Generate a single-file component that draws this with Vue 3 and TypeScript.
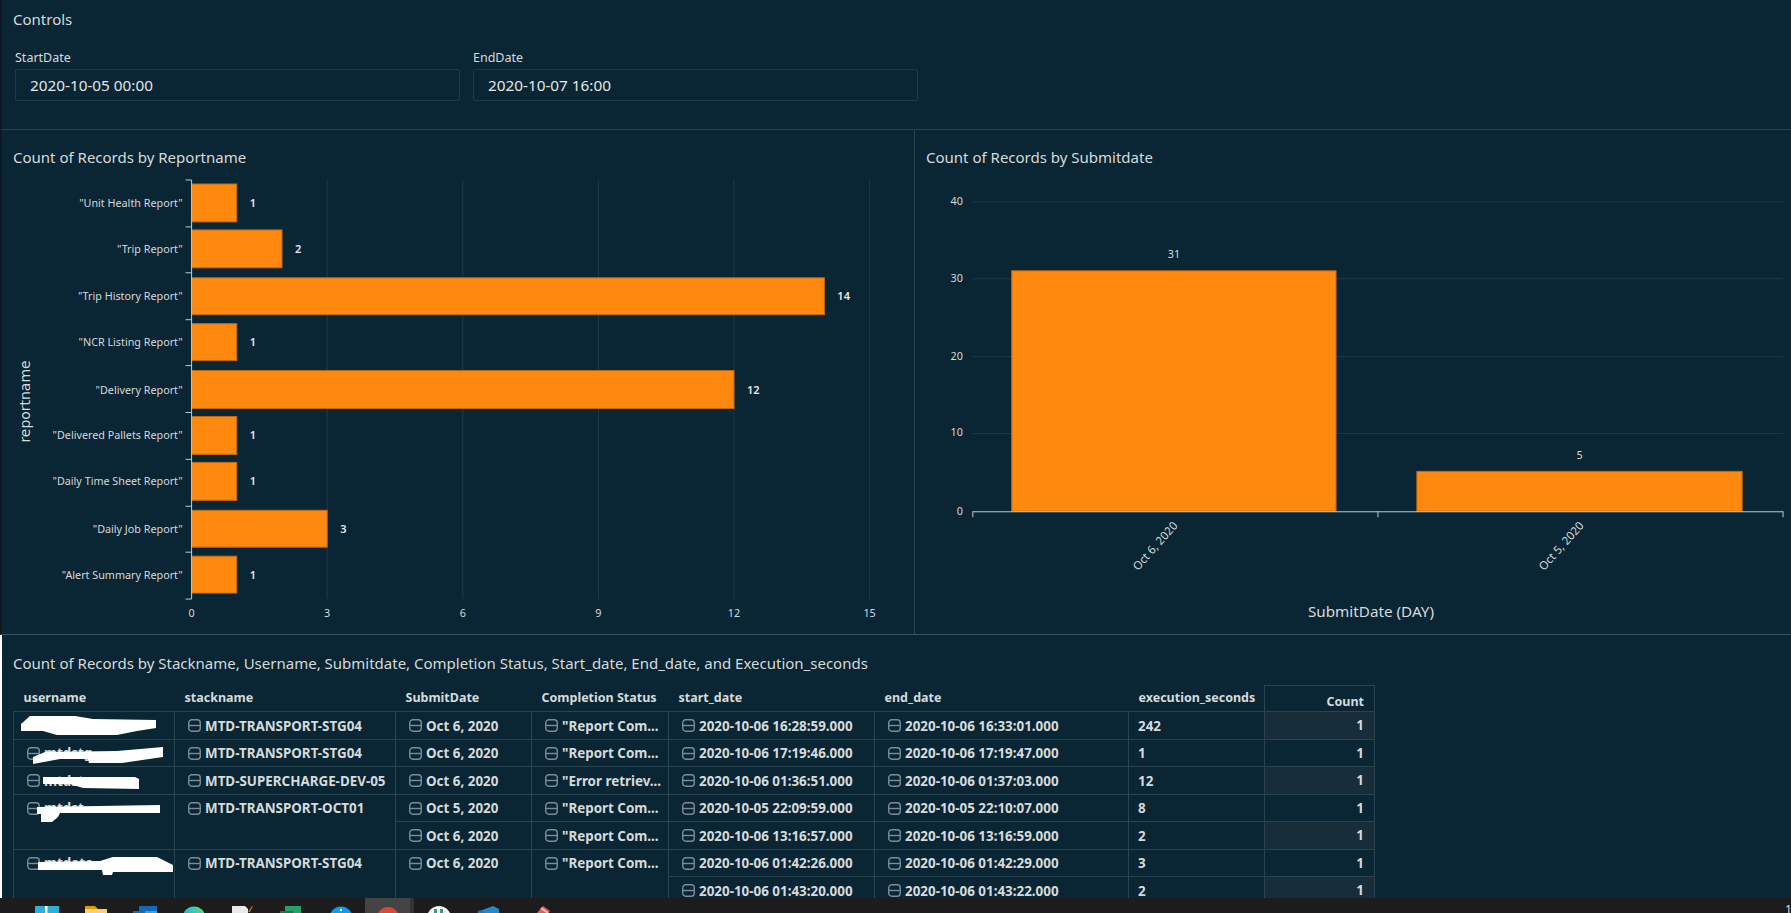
<script setup lang="ts">
interface Cell {
  text: string
  span?: number
  icon?: boolean
}

const reportBars = [
  { name: '"Unit Health Report"', value: 1, top: 184, bottom: 222 },
  { name: '"Trip Report"', value: 2, top: 230, bottom: 268 },
  { name: '"Trip History Report"', value: 14, top: 278, bottom: 315 },
  { name: '"NCR Listing Report"', value: 1, top: 324, bottom: 361 },
  { name: '"Delivery Report"', value: 12, top: 371, bottom: 409 },
  { name: '"Delivered Pallets Report"', value: 1, top: 417, bottom: 455 },
  { name: '"Daily Time Sheet Report"', value: 1, top: 463, bottom: 501 },
  { name: '"Daily Job Report"', value: 3, top: 511, bottom: 548 },
  { name: '"Alert Summary Report"', value: 1, top: 557, bottom: 594 },
]
const unit = 45.3
const axisX = 191
const xTicks = [0, 3, 6, 9, 12, 15]
const catTicks = [180, 227, 273, 320, 366, 413, 460, 507, 553, 600]

const yTicks = [
  { label: '40', y: 202 },
  { label: '30', y: 279 },
  { label: '20', y: 357 },
  { label: '10', y: 434 },
]
const dateBars = [
  { label: 'Oct 6, 2020', value: '31', x: 1011, w: 325, top: 271, tx: 1178 },
  { label: 'Oct 5, 2020', value: '5', x: 1417, w: 326, top: 472, tx: 1585 },
]

const columns = [
  { title: 'username', width: 161 },
  { title: 'stackname', width: 221 },
  { title: 'SubmitDate', width: 136 },
  { title: 'Completion Status', width: 137 },
  { title: 'start_date', width: 206 },
  { title: 'end_date', width: 254 },
  { title: 'execution_seconds', width: 136 },
]

const ic = (text: string, span?: number): Cell => ({ text, span, icon: true })

const rows: Cell[][] = [
  [ { text: 'mtdst' }, ic('MTD-TRANSPORT-STG04'), ic('Oct 6, 2020'), ic('"Report Com...'), ic('2020-10-06 16:28:59.000'), ic('2020-10-06 16:33:01.000'), { text: '242' } ],
  [ ic('mtdstg'), ic('MTD-TRANSPORT-STG04'), ic('Oct 6, 2020'), ic('"Report Com...'), ic('2020-10-06 17:19:46.000'), ic('2020-10-06 17:19:47.000'), { text: '1' } ],
  [ ic('mtdst'), ic('MTD-SUPERCHARGE-DEV-05'), ic('Oct 6, 2020'), ic('"Error retriev...'), ic('2020-10-06 01:36:51.000'), ic('2020-10-06 01:37:03.000'), { text: '12' } ],
  [ ic('mtdst', 2), ic('MTD-TRANSPORT-OCT01', 2), ic('Oct 5, 2020'), ic('"Report Com...'), ic('2020-10-05 22:09:59.000'), ic('2020-10-05 22:10:07.000'), { text: '8' } ],
  [ ic('Oct 6, 2020'), ic('"Report Com...'), ic('2020-10-06 13:16:57.000'), ic('2020-10-06 13:16:59.000'), { text: '2' } ],
  [ ic('mtdata', 2), ic('MTD-TRANSPORT-STG04', 2), ic('Oct 6, 2020', 2), ic('"Report Com...', 2), ic('2020-10-06 01:42:26.000'), ic('2020-10-06 01:42:29.000'), { text: '3' } ],
  [ ic('2020-10-06 01:43:20.000'), ic('2020-10-06 01:43:22.000'), { text: '2' } ],
]

// white scribbles someone drew over the usernames, in page coordinates
const scribbles = [
  '21,725 30,717 75,717 93,720 156,721 156,729 137,732 117,736 57,736 43,732 21,732',
  '33,758 45,753 117,752 163,748 163,758 122,764 89,764 88,760 60,760 33,765',
  '43,778 135,778 139,780 139,790 83,789 70,785 43,785',
  '37,808 160,806 160,814 60,814 58,818 52,823 41,823 41,815 37,815',
  '38,863 100,862 113,858 157,858 173,866 173,873 113,873 112,876 103,876 102,871 38,871',
]
</script>

<template>
  <div class="page">
    <section class="controls">
      <h2 class="title">Controls</h2>
      <div class="fields">
        <label class="field">
          <span class="field-label">StartDate</span>
          <span class="field-input">2020-10-05 00:00</span>
        </label>
        <label class="field">
          <span class="field-label">EndDate</span>
          <span class="field-input">2020-10-07 16:00</span>
        </label>
      </div>
    </section>

    <section class="charts">
      <div class="chart chart-left">
        <h2 class="title">Count of Records by Reportname</h2>
        <svg class="plot" width="912" height="457" viewBox="2 178 912 457">
          <line v-for="t in xTicks.slice(1)" :key="t" :x1="axisX + t * unit" :x2="axisX + t * unit" y1="180" y2="600" class="grid" />
          <g v-for="b in reportBars" :key="b.name">
            <rect :x="axisX" :y="b.top" :width="b.value * unit" :height="b.bottom - b.top" class="bar" />
            <text :x="axisX - 9" :y="(b.top + b.bottom) / 2 + 4" text-anchor="end" class="tick">{{ b.name }}</text>
            <text :x="axisX + b.value * unit + 13" :y="(b.top + b.bottom) / 2 + 4" class="value">{{ b.value }}</text>
          </g>
          <line :x1="axisX" :x2="axisX" y1="180" y2="600" class="axis" />
          <line v-for="y in catTicks" :key="y" :x1="axisX - 6" :x2="axisX" :y1="y" :y2="y" class="axis" />
          <text v-for="t in xTicks" :key="'x' + t" :x="axisX + t * unit" y="618" text-anchor="middle" class="tick">{{ t }}</text>
          <text x="29" y="402" transform="rotate(-90 29 402)" text-anchor="middle" class="axis-name wide">reportname</text>
        </svg>
      </div>

      <div class="chart chart-right">
        <h2 class="title">Count of Records by Submitdate</h2>
        <svg class="plot" width="876" height="457" viewBox="915 178 876 457">
          <line v-for="t in yTicks" :key="t.label" x1="972" x2="1784" :y1="t.y" :y2="t.y" class="grid" />
          <text v-for="t in yTicks" :key="'l' + t.label" x="962" :y="t.y + 3" text-anchor="end" class="tick">{{ t.label }}</text>
          <text x="962" y="516" text-anchor="end" class="tick">0</text>
          <g v-for="b in dateBars" :key="b.label">
            <rect :x="b.x" :y="b.top" :width="b.w" :height="512 - b.top" class="bar" />
            <text :x="b.x + b.w / 2" :y="b.top - 12.5" text-anchor="middle" class="tick">{{ b.value }}</text>
            <text :x="b.tx" y="527" :transform="`rotate(-48 ${b.tx} 527)`" text-anchor="end" class="tick date">{{ b.label }}</text>
          </g>
          <line x1="972" x2="1784" y1="512.5" y2="512.5" class="axis" />
          <line v-for="x in [972, 1378, 1784]" :key="x" :x1="x" :x2="x" y1="512" y2="518" class="axis" />
          <text x="1371" y="618" text-anchor="middle" class="axis-name">SubmitDate (DAY)</text>
        </svg>
      </div>
    </section>

    <section class="records">
      <h2 class="title">Count of Records by Stackname, Username, Submitdate, Completion Status, Start_date, End_date, and Execution_seconds</h2>
      <table class="grid-table">
        <colgroup>
          <col v-for="c in columns" :key="c.title" :style="{ width: c.width + 'px' }" />
          <col style="width: 110px" />
        </colgroup>
        <thead>
          <tr>
            <th v-for="c in columns" :key="c.title">{{ c.title }}</th>
            <th class="count-head">Count</th>
          </tr>
        </thead>
        <tbody>
          <tr v-for="(row, i) in rows" :key="i">
            <td v-for="(cell, j) in row" :key="j" :rowspan="cell.span" :class="{ plain: !cell.icon }">
              <span class="cell">
                <svg v-if="cell.icon" class="collapse" width="13" height="13" viewBox="0 0 13 13">
                  <rect x="0.75" y="0.75" width="11.5" height="11.5" rx="3" />
                  <line x1="1" x2="12" y1="6.5" y2="6.5" />
                </svg>
                {{ cell.text }}
              </span>
            </td>
            <td class="count" :class="{ striped: i % 2 === 0 }">1</td>
          </tr>
        </tbody>
      </table>
      <svg class="scribble" width="180" height="200" viewBox="0 700 180 200">
        <polygon v-for="p in scribbles" :key="p" :points="p" />
      </svg>
    </section>

    <footer class="taskbar">
      <span class="slot">
        <svg width="24" height="24" viewBox="0 0 24 24"><rect width="24" height="24" fill="#29b0dc" /><rect x="10" y="0" width="2.5" height="12" fill="#fff" /></svg>
      </span>
      <span class="slot">
        <svg width="24" height="24" viewBox="0 0 24 24"><path d="M1 0h10l3 3H1z" fill="#d89a0e" /><rect x="1" y="3" width="22" height="20" fill="#fad165" /></svg>
      </span>
      <span class="slot">
        <svg width="24" height="24" viewBox="0 0 24 24"><rect x="6" width="18" height="5" fill="#0f6cbd" /><rect y="5" width="12" height="9" fill="#0f6cbd" /><rect x="12" y="5" width="12" height="9" fill="#28a8ea" /></svg>
      </span>
      <span class="slot">
        <svg width="24" height="24" viewBox="0 0 24 24">
          <defs><linearGradient id="edge" x1="0" y1="1" x2="1" y2="0"><stop offset="0" stop-color="#1b6fc4" /><stop offset="0.55" stop-color="#2cc3d0" /><stop offset="1" stop-color="#6fdc6a" /></linearGradient></defs>
          <circle cx="12" cy="12" r="11.5" fill="url(#edge)" />
        </svg>
      </span>
      <span class="slot">
        <svg width="24" height="24" viewBox="0 0 24 24"><path d="M1 0h13l3 3v20H1z" fill="#e9e9e9" /><path d="M17 6 21 0h1l-3 6z" fill="#c8701c" /></svg>
      </span>
      <span class="slot">
        <svg width="24" height="24" viewBox="0 0 24 24"><rect x="5" width="16" height="20" fill="#21a366" /><rect y="5" width="5" height="10" fill="#107c41" /><rect x="5" y="5" width="8" height="10" fill="#107c41" /></svg>
      </span>
      <span class="slot">
        <svg width="24" height="24" viewBox="0 0 24 24"><circle cx="12" cy="12" r="11.5" fill="#0a9cf0" /><circle cx="12" cy="4" r="1.2" fill="#fff" /></svg>
      </span>
      <span class="slot active">
        <svg width="24" height="24" viewBox="0 0 24 24"><circle cx="12" cy="12" r="11" fill="#d9483b" /></svg>
      </span>
      <span class="slot">
        <svg width="24" height="24" viewBox="0 0 24 24"><circle cx="12" cy="12" r="12" fill="#f4f4f4" /><rect x="7" y="3" width="3" height="6" fill="#2f9e8f" /><rect x="13" y="3" width="3" height="6" fill="#2f9e8f" /></svg>
      </span>
      <span class="slot">
        <svg width="24" height="24" viewBox="0 0 24 24"><path d="M17 0 23 3v20h-2L7 9 1 6z" fill="#2489ca" /><path d="M1 6l3-2 5 3z" fill="#1070b3" /></svg>
      </span>
      <span class="slot pencil">
        <svg width="24" height="24" viewBox="0 0 24 24"><path d="M7 8 14 0l7 5-7 9z" fill="#d9605a" /><path d="M12 2l7 5" stroke="#f3b6b0" stroke-width="2" /></svg>
      </span>
      <span class="clock">10</span>
    </footer>
  </div>
</template>

<style scoped>
.page {
  width: 1791px;
  height: 913px;
  display: flex;
  flex-direction: column;
  overflow: hidden;
  background: #0a2533;
  color: #d5dbdb;
  font-family: "Noto Sans", "Liberation Sans", sans-serif;
}

.title {
  margin: 0;
  font-size: 15px;
  line-height: 20px;
  font-weight: 400;
  color: #d5dbdb;
  white-space: nowrap;
}

.controls {
  height: 129px;
  box-sizing: border-box;
  padding: 9px 0 0 11px;
  border-left: 2px solid #0c1a24;
  flex: none;
}

.fields {
  display: flex;
  gap: 13px;
  margin: 20px 0 0 0;
  padding-left: 2px;
}

.field {
  display: flex;
  flex-direction: column;
  width: 445px;
}

.field-label {
  font-size: 12.5px;
  line-height: 18px;
  margin-bottom: 2px;
}

.field-input {
  height: 32px;
  box-sizing: border-box;
  border: 1px solid #1f3a47;
  border-radius: 2px;
  padding-left: 14px;
  font-size: 15.3px;
  line-height: 30px;
  color: #e3e7e7;
}

.charts {
  height: 506px;
  flex: none;
  display: flex;
  border-top: 1px solid #2a4350;
  border-bottom: 1px solid #3a5360;
  box-sizing: border-box;
  border-left: 2px solid #0c1a24;
}

.chart {
  display: flex;
  flex-direction: column;
  padding-top: 17px;
}

.chart-left {
  width: 912px;
  border-right: 1px solid #2a4350;
}

.chart-left .title {
  padding-left: 11px;
}

.chart-right {
  flex: 1;
}

.chart-right .title {
  padding-left: 11px;
}

.plot {
  display: block;
  margin-top: 11px;
}

.plot .grid {
  stroke: #1f3a47;
  stroke-width: 1;
}

.plot .axis {
  stroke: #c3cbcb;
  stroke-width: 1;
}

.plot .bar {
  fill: #ff880f;
  stroke: #c2690f;
  stroke-width: 1;
}

.plot text {
  font-family: "Noto Sans", "Liberation Sans", sans-serif;
}

.plot .tick {
  font-size: 10.8px;
  fill: #d5dbdb;
}

.plot .tick.date {
  font-size: 11.5px;
}

.plot .value {
  font-size: 11px;
  font-weight: 600;
  fill: #e6eaea;
}

.plot .axis-name {
  font-size: 15.3px;
  fill: #d5dbdb;
}

.plot .axis-name.wide {
  font-family: "DejaVu Sans", sans-serif;
  font-size: 14px;
}

.records {
  flex: 1;
  min-height: 0;
  position: relative;
  overflow: hidden;
  box-sizing: border-box;
  padding: 18px 0 0 11px;
  border-left: 2px solid #ffffff;
}

.grid-table {
  margin-top: 12px;
  table-layout: fixed;
  width: 1361px;
  border-collapse: collapse;
  font-size: 13.4px;
  font-weight: 700;
  color: #d5dbdb;
}

.grid-table th {
  height: 26px;
  box-sizing: border-box;
  padding: 0 0 2px 10px;
  text-align: left;
  font-weight: 700;
  font-size: 12.5px;
  white-space: nowrap;
  border-bottom: 1px solid #2a4350;
}

.grid-table th.count-head {
  text-align: right;
  padding: 6px 10px 0 0;
  border: 1px solid #2a4350;
}

.grid-table td {
  height: 27.5px;
  box-sizing: border-box;
  padding: 0 0 0 13px;
  border: 1px solid #2a4350;
  vertical-align: top;
  white-space: nowrap;
  overflow: hidden;
}

.grid-table td.plain {
  padding-left: 9px;
}

.cell {
  display: flex;
  align-items: center;
  gap: 4px;
  height: 26.5px;
  padding-top: 1px;
  box-sizing: border-box;
}

.collapse {
  flex: none;
}

.collapse rect {
  fill: none;
  stroke: #7b8e98;
  stroke-width: 1.4;
}

.collapse line {
  stroke: #7b8e98;
  stroke-width: 1.4;
}

.grid-table td.count {
  text-align: right;
  padding: 0 10px 0 0;
  line-height: 26.5px;
}

.grid-table td.count.striped {
  background: #182d3a;
}

.scribble {
  position: absolute;
  left: -2px;
  top: 64px;
}

.scribble polygon {
  fill: #ffffff;
}

.taskbar {
  height: 15px;
  flex: none;
  display: flex;
  background: #1c1c1c;
  padding-left: 22px;
  overflow: hidden;
}

.slot {
  width: 49px;
  flex: none;
  box-sizing: border-box;
  padding-top: 8px;
  display: flex;
  justify-content: center;
}

.slot.active {
  background: #444444;
  border-right: 4px solid #333333;
}

.slot.pencil {
  margin-left: 4px;
}

.clock {
  margin-left: auto;
  width: 6px;
  overflow: hidden;
  padding-top: 5px;
  font-size: 12px;
  line-height: 14px;
  color: #e6e6e6;
  font-family: "Open Sans", sans-serif;
}
</style>
